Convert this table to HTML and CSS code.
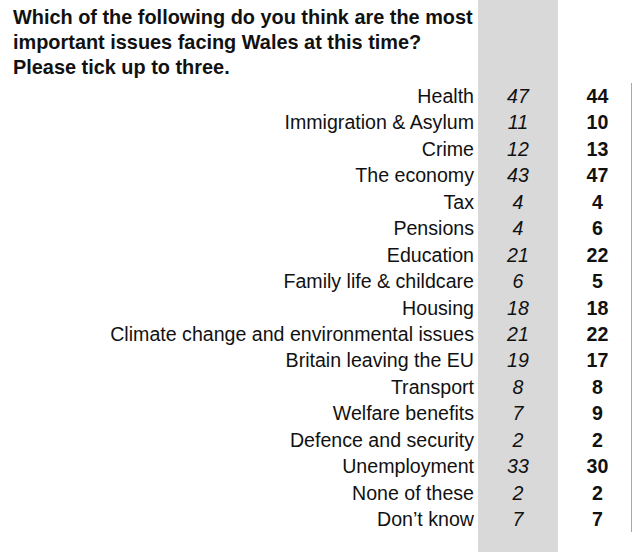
FILE: index.html
```html
<!DOCTYPE html>
<html>
<head>
<meta charset="utf-8">
<link rel="stylesheet" href="styles.css">
</head>
<body>
<div class="sheet">
  <div class="col-labels">
    <h1 class="question">Which of the following do you think are the most<br>important issues facing Wales at this time?<br>Please tick up to three.</h1>
    <ul class="rows labels">
      <li>Health</li>
      <li>Immigration &amp; Asylum</li>
      <li>Crime</li>
      <li>The economy</li>
      <li>Tax</li>
      <li>Pensions</li>
      <li>Education</li>
      <li>Family life &amp; childcare</li>
      <li>Housing</li>
      <li>Climate change and environmental issues</li>
      <li>Britain leaving the EU</li>
      <li>Transport</li>
      <li>Welfare benefits</li>
      <li>Defence and security</li>
      <li>Unemployment</li>
      <li>None of these</li>
      <li>Don’t know</li>
    </ul>
  </div>
  <div class="col-prev">
    <ul class="rows nums italic">
      <li>47</li><li>11</li><li>12</li><li>43</li><li>4</li><li>4</li><li>21</li><li>6</li><li>18</li><li>21</li><li>19</li><li>8</li><li>7</li><li>2</li><li>33</li><li>2</li><li>7</li>
    </ul>
  </div>
  <div class="col-now">
    <ul class="rows nums bold">
      <li>44</li><li>10</li><li>13</li><li>47</li><li>4</li><li>6</li><li>22</li><li>5</li><li>18</li><li>22</li><li>17</li><li>8</li><li>9</li><li>2</li><li>30</li><li>2</li><li>7</li>
    </ul>
  </div>
</div>
</body>
</html>
```
FILE: styles.css
```css
html, body {
  margin: 0;
  padding: 0;
  background: #ffffff;
}
body {
  font-family: "Liberation Sans", Arial, sans-serif;
  color: #111111;
  width: 633px;
  height: 552px;
  overflow: hidden;
}
.sheet {
  display: flex;
  height: 552px;
}
.col-labels {
  width: 478px;
  flex: none;
}
.question {
  margin: 0;
  height: 83px;
  box-sizing: border-box;
  padding: 5px 0 0 13px;
  font-size: 19.9px;
  line-height: 25px;
  font-weight: bold;
  white-space: nowrap;
}
.rows {
  list-style: none;
  margin: 0;
  padding: 0;
  font-size: 19.6px;
}
.rows li {
  height: 26.44px;
  line-height: 26.44px;
  white-space: nowrap;
}
.labels {
  text-align: right;
  padding-right: 4px;
}
.col-prev {
  width: 80px;
  flex: none;
  background: #d9d9d9;
  padding-top: 83px;
  box-sizing: border-box;
}
.col-now {
  width: 74px;
  flex: none;
  padding-top: 83px;
  box-sizing: border-box;
}
.col-now .rows {
  border-right: 1px solid #a8a8a8;
  padding-left: 6px;
}
.nums {
  text-align: center;
}
.italic {
  font-style: italic;
}
.bold {
  font-weight: bold;
}
```
